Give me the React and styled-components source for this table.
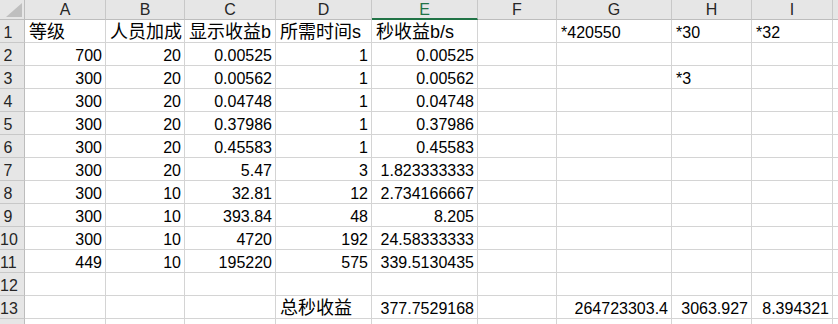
import styled, {createGlobalStyle} from 'styled-components';

const GlobalStyle = createGlobalStyle`
  body {
    margin: 0;
    background: #ffffff;
    font-family: 'Liberation Sans', 'Noto Sans CJK SC', sans-serif;
  }
`;

const columns = ['A', 'B', 'C', 'D', 'E', 'F', 'G', 'H', 'I', ''];
const selectedColumn = 'E';

// each row: [value, align] per column A..I
const rows = [
  [['等级', 'left'], ['人员加成', 'left'], ['显示收益b', 'left'], ['所需时间s', 'left'], ['秒收益b/s', 'left'], null, ['*420550', 'left'], ['*30', 'left'], ['*32', 'left']],
  [['700'], ['20'], ['0.00525'], ['1'], ['0.00525']],
  [['300'], ['20'], ['0.00562'], ['1'], ['0.00562'], null, null, ['*3', 'left']],
  [['300'], ['20'], ['0.04748'], ['1'], ['0.04748']],
  [['300'], ['20'], ['0.37986'], ['1'], ['0.37986']],
  [['300'], ['20'], ['0.45583'], ['1'], ['0.45583']],
  [['300'], ['20'], ['5.47'], ['3'], ['1.823333333']],
  [['300'], ['10'], ['32.81'], ['12'], ['2.734166667']],
  [['300'], ['10'], ['393.84'], ['48'], ['8.205']],
  [['300'], ['10'], ['4720'], ['192'], ['24.58333333']],
  [['449'], ['10'], ['195220'], ['575'], ['339.5130435']],
  [],
  [null, null, null, ['总秒收益', 'left'], ['377.7529168'], null, ['264723303.4'], ['3063.927'], ['8.394321']],
];

const hasCjk = (text) => /[\u4e00-\u9fff]/.test(text);

export default function App() {
  return (
    <>
      <GlobalStyle />
      <Sheet>
        <Corner>
          <svg width="16" height="14" viewBox="0 0 16 14">
            <polygon points="16,0 16,14 0,14" fill="#bfbfbf" />
          </svg>
        </Corner>
        {columns.map((col, i) => (
          <ColHeader key={i} $selected={col === selectedColumn}>
            {col}
          </ColHeader>
        ))}
        {rows.map((row, r) => (
          <Row key={r}>
            <RowHeader>{r + 1}</RowHeader>
            {columns.map((col, c) => {
              const cell = row[c];
              const text = cell ? cell[0] : '';
              return (
                <Cell key={c} $align={cell && cell[1] ? cell[1] : 'right'} $cjk={hasCjk(text)}>
                  {text}
                </Cell>
              );
            })}
          </Row>
        ))}
        {/* row 14, only its top edge shows */}
        <Row>
          <RowHeader />
          {columns.map((col, c) => (
            <Cell key={c} />
          ))}
        </Row>
      </Sheet>
    </>
  );
}

const Sheet = styled.div`
  display: grid;
  grid-template-columns: 25px 81px 79px 91px 96px 106px 79px 115px 80px 81px 1fr;
  grid-auto-rows: 23px;
  grid-template-rows: 20px;
  width: 838px;
  height: 324px;
  overflow: hidden;
  color: #000000;
`;

const Row = styled.div`
  display: contents;
`;

const Corner = styled.div`
  background: #e6e6e6;
  border-right: 1px solid #bdbdbd;
  border-bottom: 1px solid #bdbdbd;
  box-sizing: border-box;
  display: flex;
  align-items: flex-end;
  justify-content: flex-end;
  padding: 0 2px 2px 0;
`;

const ColHeader = styled.div`
  background: #e6e6e6;
  box-sizing: border-box;
  border-right: 1px solid #c8c8c8;
  border-bottom: ${(p) => (p.$selected ? '2px solid #217346' : '1px solid #bdbdbd')};
  color: ${(p) => (p.$selected ? '#217346' : '#262626')};
  font-size: 16px;
  line-height: 18px;
  padding-top: 1px;
  text-align: center;
`;

const RowHeader = styled.div`
  background: #e6e6e6;
  box-sizing: border-box;
  border-right: 1px solid #bdbdbd;
  border-bottom: 1px solid #c8c8c8;
  color: #262626;
  font-size: 16px;
  line-height: 18px;
  padding: 4px 8px 0 0;
  text-align: center;
  white-space: nowrap;
`;

const Cell = styled.div`
  box-sizing: border-box;
  border-right: 1px solid #d4d4d4;
  border-bottom: 1px solid #d4d4d4;
  font-size: ${(p) => (p.$cjk ? '18px' : '16px')};
  line-height: 18px;
  padding: ${(p) => (p.$cjk ? '3px 3px 0 4px' : '4px 3px 0 4px')};
  text-align: ${(p) => p.$align};
  white-space: nowrap;
  overflow: hidden;
`;
